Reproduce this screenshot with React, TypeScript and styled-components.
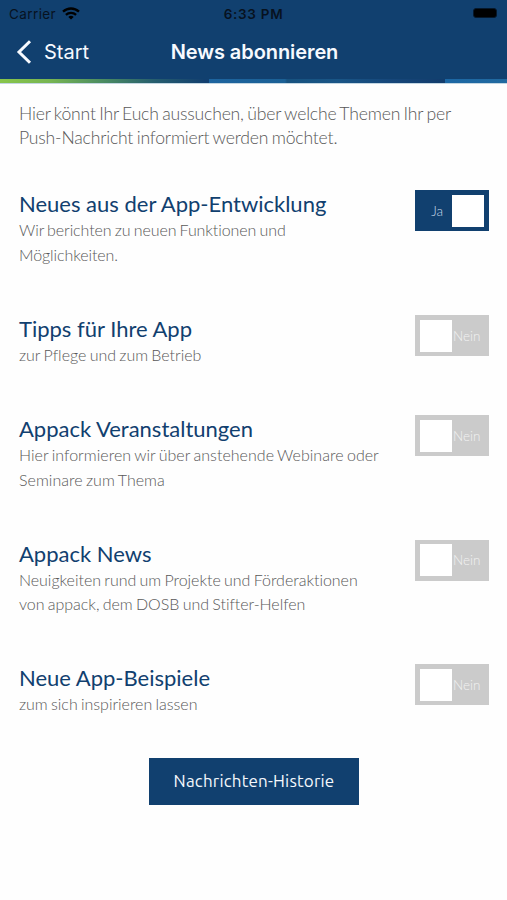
import React, { useState } from 'react';
import styled, { createGlobalStyle } from 'styled-components';

const GlobalStyle = createGlobalStyle`
  * { box-sizing: border-box; }
  body { margin: 0; background: #fefefe; }
`;

const NAVY = '#11406f';

const Screen = styled.div`
  width: 507px;
  height: 900px;
  overflow: hidden;
  background: #fefefe;
  font-family: Lato, sans-serif;
  font-weight: 300;
  font-variant-ligatures: none;
  color: #585858;
`;

const Header = styled.header`
  height: 79px;
  background: ${NAVY};
  font-family: Inter, sans-serif;
`;

const StatusBar = styled.div`
  height: 27px;
  padding: 0 10px 0 9px;
  display: grid;
  grid-template-columns: 1fr auto 1fr;
  align-items: center;
  color: #07121f;
  font-size: 13.5px;
  font-weight: 400;
`;

const Carrier = styled.div`
  display: flex;
  align-items: center;
  gap: 6px;
  letter-spacing: 0.4px;
`;

const Clock = styled.div`
  font-weight: 600;
  font-size: 13.5px;
  letter-spacing: 0.7px;
  margin-right: -1px;
`;

const Battery = styled.div`
  justify-self: end;
  width: 24px;
  height: 10px;
  margin-top: -1px;
  border-radius: 3px;
  background: #000;
  border: 1px solid #06182b;
`;

const NavBar = styled.div`
  height: 52px;
  padding: 0 16px 2px;
  display: grid;
  grid-template-columns: 1fr auto 1fr;
  align-items: center;
  color: #f7faff;
`;

const Back = styled.button`
  display: flex;
  align-items: center;
  gap: 12px;
  padding: 0;
  border: 0;
  background: none;
  color: inherit;
  font: 400 20px Inter, sans-serif;
`;

const Heading = styled.h1`
  margin: 0 -1px 0 1px;
  font-size: 20px;
  font-weight: 600;
  letter-spacing: -0.08px;
`;

const Stripe = styled.div`
  height: 5px;
  border-bottom: 1px solid #c3d6e2;
  background:
    linear-gradient(90deg, #1c67a4, #21699f) 445px 0 / 62px 5px no-repeat,
    linear-gradient(90deg, #1d649f 0, #1b6095 76px, #17527f 78px, #195586 128px, #16477a 180px, #123c6c 236px) 209px 0 / 236px 5px no-repeat,
    linear-gradient(90deg, #88c54a 0, #77b552 50px, #498a62 105px, #265d6e 155px, #123f6f 205px);
`;

const Content = styled.main`
  padding: 18px 18px 0 19px;
`;

const Intro = styled.p`
  margin: 0 0 41px;
  font-size: 17.6px;
  letter-spacing: -0.19px;
  word-spacing: -1.1px;
  line-height: 23.5px;
  white-space: pre-line;
`;

const Topic = styled.section<{ $height: number }>`
  height: ${p => p.$height}px;
  display: flex;
  justify-content: space-between;
  align-items: flex-start;
`;

const TopicTitle = styled.h2`
  margin: 0;
  padding-bottom: 1px;
  font-size: 22px;
  font-weight: 400;
  line-height: 27px;
  color: ${NAVY};
`;

const TopicText = styled.p<{ $spacing: number }>`
  margin: 0;
  font-size: 16px;
  line-height: 24.5px;
  letter-spacing: ${p => p.$spacing}px;
  word-spacing: -1px;
  white-space: pre-line;
`;

const Switch = styled.button<{ $on: boolean }>`
  width: 74px;
  height: 41px;
  flex: none;
  padding: 4px 5px;
  border: 0;
  display: flex;
  flex-direction: ${p => (p.$on ? 'row-reverse' : 'row')};
  align-items: center;
  background: ${p => (p.$on ? NAVY : '#cbcbcb')};
`;

const Knob = styled.span`
  width: 32px;
  height: 32px;
  background: #fff;
`;

const SwitchLabel = styled.span<{ $on: boolean }>`
  flex: 1;
  text-align: ${p => (p.$on ? 'right' : 'left')};
  padding: ${p => (p.$on ? '0 9px 0 0' : '0 0 0 1px')};
  font: 300 13.5px Lato, sans-serif;
  color: ${p => (p.$on ? '#c9d9e8' : '#f2f2f2')};
`;

const HistoryButton = styled.button`
  display: block;
  width: 210px;
  height: 47px;
  margin: -6px auto 0 130px;
  padding: 0 0 2px;
  border: 0;
  background: ${NAVY};
  color: #f4f8fc;
  font: 400 17px Ubuntu, 'Noto Sans', sans-serif;
  letter-spacing: 0.18px;
`;

const topics = [
  { title: 'Neues aus der App-Entwicklung', text: 'Wir berichten zu neuen Funktionen und\nMöglichkeiten.', height: 125, spacing: -0.09, on: true },
  { title: 'Tipps für Ihre App', text: 'zur Pflege und zum Betrieb', height: 100, spacing: -0.02 },
  { title: 'Appack Veranstaltungen', text: 'Hier informieren wir über anstehende Webinare oder\nSeminare zum Thema', height: 124.5, spacing: 0.03 },
  { title: 'Appack News', text: 'Neuigkeiten rund um Projekte und Förderaktionen\nvon appack, dem DOSB und Stifter-Helfen', height: 124.5, spacing: -0.03 },
  { title: 'Neue App-Beispiele', text: 'zum sich inspirieren lassen', height: 100, spacing: -0.02 },
];

function WifiIcon() {
  return (
    <svg width="18" height="13" viewBox="0 0 18 13" fill="none" stroke="#000" strokeWidth="2.3">
      <path d="M1 4.7C5.5.4 12.5.4 17 4.7M3.9 7.8c2.9-2.7 7.3-2.7 10.2 0" />
      <path d="M9 12.6 6.3 9.9c1.5-1.4 3.9-1.4 5.4 0Z" fill="#000" stroke="none" />
    </svg>
  );
}

function TopicSwitch({ initial }: { initial: boolean }) {
  const [on, setOn] = useState(initial);
  return (
    <Switch $on={on} role="switch" aria-checked={on} onClick={() => setOn(!on)}>
      <Knob />
      <SwitchLabel $on={on}>{on ? 'Ja' : 'Nein'}</SwitchLabel>
    </Switch>
  );
}

export default function App() {
  return (
    <Screen>
      <GlobalStyle />
      <Header>
        <StatusBar>
          <Carrier>Carrier <WifiIcon /></Carrier>
          <Clock>6:33 PM</Clock>
          <Battery />
        </StatusBar>
        <NavBar>
          <Back>
            <svg width="16" height="24" viewBox="0 0 16 24" fill="none" stroke="currentColor" strokeWidth="3">
              <path d="M14 1.2 3 12l11 10.8" />
            </svg>
            Start
          </Back>
          <Heading>News abonnieren</Heading>
        </NavBar>
      </Header>
      <Stripe />
      <Content>
        <Intro>{'Hier könnt Ihr Euch aussuchen, über welche Themen Ihr per\nPush-Nachricht informiert werden möchtet.'}</Intro>
        {topics.map(t => (
          <Topic key={t.title} $height={t.height}>
            <div>
              <TopicTitle>{t.title}</TopicTitle>
              <TopicText $spacing={t.spacing}>{t.text}</TopicText>
            </div>
            <TopicSwitch initial={!!t.on} />
          </Topic>
        ))}
        <HistoryButton>Nachrichten-Historie</HistoryButton>
      </Content>
    </Screen>
  );
}
